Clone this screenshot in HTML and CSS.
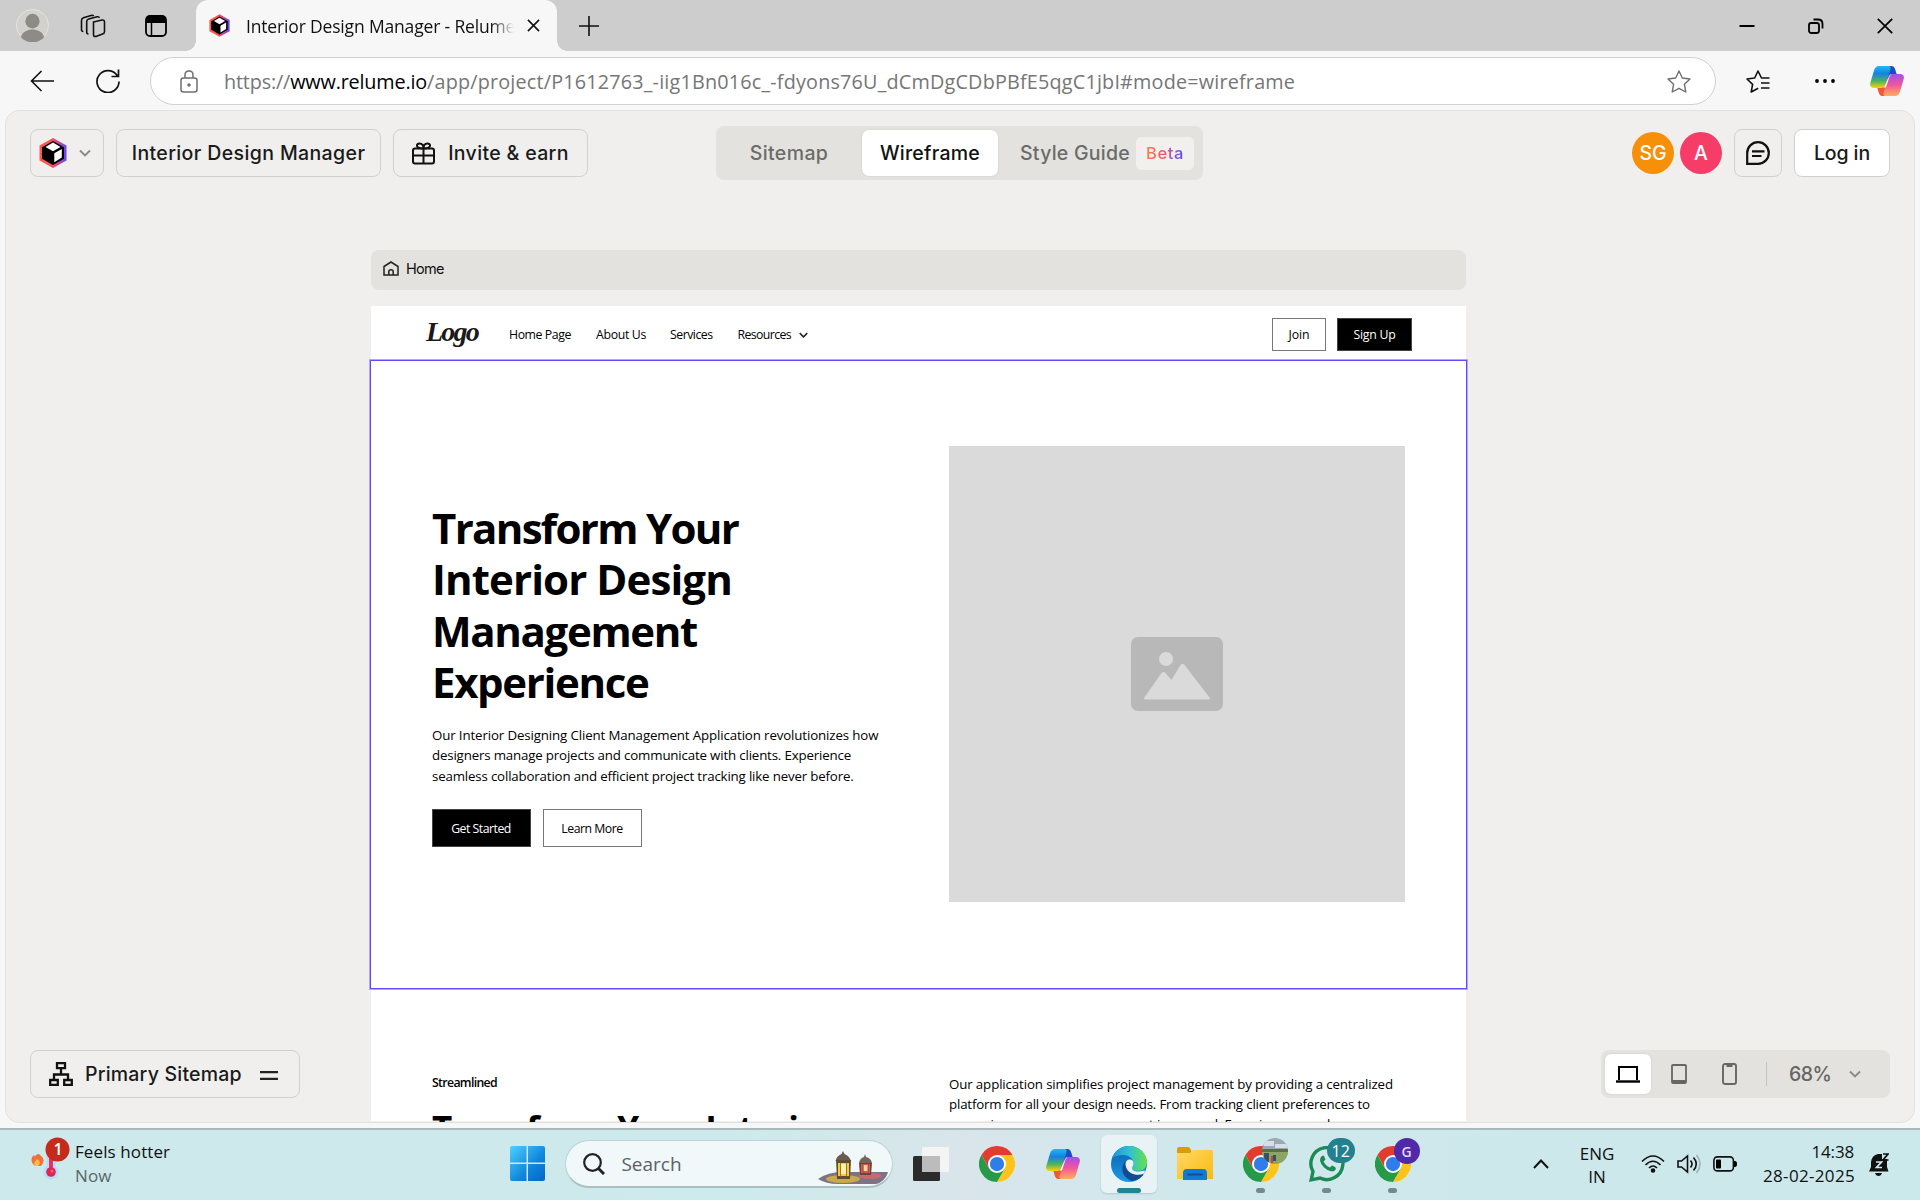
FILE: index.html
```html
<!DOCTYPE html>
<html lang="en">
<head>
<meta charset="utf-8">
<title>Interior Design Manager - Relume</title>
<link rel="stylesheet" href="styles.css">
</head>
<body>
<svg width="0" height="0" class="defs" aria-hidden="true">
  <defs>
    <linearGradient id="gHex" x1="0" y1="0" x2="1" y2="0"><stop offset=".3" stop-color="#ff5a4d"/><stop offset=".65" stop-color="#d6447e"/><stop offset="1" stop-color="#6248ff"/></linearGradient>
    <linearGradient id="gWin" x1="0" y1="0" x2="1" y2="1"><stop offset="0" stop-color="#4fd0ff"/><stop offset=".6" stop-color="#0f86dc"/><stop offset="1" stop-color="#0067c8"/></linearGradient>
    <linearGradient id="gCa" x1="0" y1="0" x2="0" y2="1"><stop offset="0" stop-color="#22b8f4"/><stop offset=".35" stop-color="#1482e0"/><stop offset=".7" stop-color="#52b45c"/><stop offset="1" stop-color="#ffd400"/></linearGradient>
    <linearGradient id="gCb" x1="0" y1="0" x2="0" y2="1"><stop offset="0" stop-color="#a24df0"/><stop offset=".5" stop-color="#f2569a"/><stop offset="1" stop-color="#ffb05a"/></linearGradient>
    <linearGradient id="gEa" x1="0" y1="0" x2="1" y2="0"><stop offset="0" stop-color="#1d94d8"/><stop offset=".5" stop-color="#2fc1d4"/><stop offset="1" stop-color="#67e244"/></linearGradient>
    <linearGradient id="gEb" x1="0" y1="0" x2="0" y2="1"><stop offset="0" stop-color="#0a5fb0"/><stop offset="1" stop-color="#1b9ae4"/></linearGradient>
    <linearGradient id="gFo" x1="0" y1="0" x2="1" y2="1"><stop offset="0" stop-color="#ffd968"/><stop offset="1" stop-color="#fbb90d"/></linearGradient>
    <symbol id="relume" viewBox="0 0 28 30">
      <path d="M14 0 27.500 7.500v15L14 30 .5 22.500v-15z" fill="url(#gHex)"/>
      <path d="M14 3 25 9.200v11.600L14 27 3 20.800V9.200z" fill="#000"/>
      <path d="M14 4.500 21.500 9 14 13.300 6.500 9z" fill="#fff"/>
      <path d="M15.300 15.200 22.800 11v8.500l-7.500 4.700z" fill="#fff"/>
    </symbol>
    <symbol id="copilot" viewBox="0 0 34 30">
      <path d="M17 0h4c3 0 4 2 5 6l1 3h-7l-4 6z" fill="#1b4cc9"/>
      <path d="M17 30h-4c-3 0-4-2-5-6l-1-3h8l3-6z" fill="#ee5a33"/>
      <path d="M9 0h9c2.500 0 3 1 2.500 3l-4.500 15c-.8 2.500-2 4-5 4H4c-3 0-4.500-2-3.700-5L4 4.500C5 1.500 6.500 0 9 0z" fill="url(#gCa)"/>
      <path d="M25 30h-9c-2.500 0-3-1-2.500-3L18 12c.8-2.500 2-4 5-4h7c3 0 4.500 2 3.700 5L30 25.500c-1 3-2.500 4.500-5 4.500z" fill="url(#gCb)"/>
      <path d="M20 8.500h1.500c-1.500.8-2 2-2.600 4L16 21.500h-2.500c1-.8 1.500-1.700 2-3.300z" fill="#f6f6f8"/>
    </symbol>
    <symbol id="chrome" viewBox="0 0 48 48">
      <circle cx="24" cy="24" r="24" fill="#fff"/>
      <path d="M24 12h20.800A24 24 0 0 0 3.200 12l10.400 18z" fill="#e33b2e"/>
      <path d="M34.400 30 24 48A24 24 0 0 0 44.800 12H24z" fill="#fcc41a"/>
      <path d="M13.600 30 3.200 12A24 24 0 0 0 24 48l10.400-18z" fill="#269a48"/>
      <circle cx="24" cy="24" r="12" fill="#fff"/><circle cx="24" cy="24" r="9.500" fill="#2f7de9"/>
    </symbol>
    <symbol id="chev" viewBox="0 0 12 8"><path d="M1 1.500 6 6.500l5-5" fill="none" stroke="currentColor" stroke-width="1.900"/></symbol>
  </defs>
</svg>

<div class="screen">
  <header class="tabstrip">
    <svg class="ava" viewBox="0 0 34 34"><circle cx="17" cy="17" r="16.500" fill="#d3d1ce" stroke="#e6e4e1"/><ellipse cx="17" cy="12.500" rx="7.300" ry="7.500" fill="#8e8a86"/><path d="M5 29c2-6 7-8 12-8s10 2 12 8a16 16 0 0 1-24 0z" fill="#8e8a86"/></svg>
    <svg class="wsp" viewBox="0 0 26 24" fill="none" stroke="#111" stroke-width="1.600"><path d="m13.500 8 8.500-2q2.500-.3 2.500 2v9.500q0 2-2 2.600l-6.500 2.300q-2.500.6-2.500-1.800z"/><path d="M8.500 20q-1.800 0-1.800-2V7.500q0-2 2-2.500L17 2.800q2-.3 2.500 1"/><path d="M3.300 17.500Q1.500 17.500 1.500 15.500V6.500q0-2 2-2.700L11 1.500q2-.4 2.700.5"/></svg>
    <svg class="tac" viewBox="0 0 22 22"><rect x="1" y="1" width="20" height="20" rx="4" fill="none" stroke="#000" stroke-width="1.800"/><path d="M1 8V4q0-3 3-3h14q3 0 3 3v4z"/><path d="M6.500 8v13" stroke="#000" stroke-width="1.500"/></svg>
    <div class="tab">
      <svg class="fav"><use href="#relume"/></svg>
      <span class="tab-title">Interior Design Manager - Relume</span>
      <svg class="tab-x" viewBox="0 0 14 14"><path d="m1 1 12 12M13 1 1 13" stroke="#111" stroke-width="1.700"/></svg>
    </div>
    <svg class="plus" viewBox="0 0 20 20"><path d="M10 0v20M0 10h20" stroke="#111" stroke-width="1.600"/></svg>
    <div class="winbtns">
      <svg viewBox="0 0 16 16"><path d="M.5 8h15" stroke="#000" stroke-width="2"/></svg>
      <svg viewBox="0 0 16 16" fill="none" stroke="#000" stroke-width="1.800"><rect x="1" y="5" width="10" height="10" rx="2.200"/><path d="M5.500 1.500H10q4.500 0 4.500 4.500v4.500"/></svg>
      <svg viewBox="0 0 16 16"><path d="m.8.8 14.400 14.400M15.200.8.8 15.200" stroke="#000" stroke-width="1.700"/></svg>
    </div>
  </header>

  <div class="toolbar">
    <svg class="back" viewBox="0 0 24 22" fill="none" stroke="#111" stroke-width="1.600"><path d="M24 11H1.500M11.500 1l-10 10 10 10"/></svg>
    <svg class="reload" viewBox="0 0 24 24" fill="none" stroke="#111" stroke-width="1.700"><path d="M21.500 7A11 11 0 1 0 23 12.500M22.500.5V7.500h-7"/></svg>
    <div class="address">
      <svg class="lock" viewBox="0 0 18 23" fill="none" stroke="#6f6f6f" stroke-width="1.500"><rect x="1" y="8" width="16" height="14" rx="2.500"/><path d="M5 8V5q0-4 4-4t4 4v3"/><circle cx="9" cy="15" r="1" fill="#6f6f6f"/></svg>
      <span class="url">https://<b>www.relume.io</b><i>/app/project/P1612763_-iig1Bn016c_-fdyons76U_dCmDgCDbPBfE5qgC1jbI#mode=wireframe</i></span>
      <svg class="star" viewBox="0 0 24 23" fill="none" stroke="#6f6f6f" stroke-width="1.400" stroke-linejoin="round"><path d="m12 1 3.300 7 7.700 1-5.600 5.300L18.800 22 12 18.300 5.200 22l1.400-7.700L1 9l7.700-1z"/></svg>
    </div>
    <svg class="favs" viewBox="0 0 24 23" fill="none" stroke="#111" stroke-width="1.600" stroke-linejoin="round"><path d="M23.500 8h-8L12 1 8.700 8 1 9l5.600 5.300L5.200 22l7-3.800M15 13h8.500M15 18h8.500"/></svg>
    <svg class="dots" viewBox="0 0 20 4"><circle cx="2" cy="2" r="1.900"/><circle cx="10" cy="2" r="1.900"/><circle cx="18" cy="2" r="1.900"/></svg>
    <svg class="cop"><use href="#copilot"/></svg>
  </div>

  <main class="app">
    <div class="app-head">
      <div class="head-left">
        <div class="btn btn-logo"><svg class="brand"><use href="#relume"/></svg><svg class="chev grey"><use href="#chev"/></svg></div>
        <div class="btn btn-name">Interior Design Manager</div>
        <div class="btn btn-invite"><svg class="gift" viewBox="0 0 23 22" fill="none" stroke="#111" stroke-width="2"><rect x="1" y="6" width="21" height="15" rx="2"/><path d="M1 13h21M11.500 6v15M11.500 6C3 6 4 1 7.500 1c2.500 0 4 2 4 5 0-3 1.500-5 4-5C19 1 20 6 11.500 6z"/></svg><span>Invite &amp; earn</span></div>
      </div>
      <nav class="modes">
        <span class="mode">Sitemap</span>
        <span class="mode mode-on">Wireframe</span>
        <span class="mode mode-guide">Style Guide<em class="beta"><span>Beta</span></em></span>
      </nav>
      <div class="head-right">
        <span class="user user-sg">SG</span>
        <span class="user user-a">A</span>
        <div class="btn btn-chat"><svg viewBox="0 0 24 24" fill="none" stroke="#111" stroke-width="2.200"><path d="M1.200 22.800V12A10.800 10.800 0 1 1 12 22.800zM6 10.300h12.500M6 15h9.500"/></svg></div>
        <div class="btn btn-login">Log in</div>
      </div>
    </div>

    <div class="canvas">
      <div class="pagebar"><svg viewBox="0 0 16 15" fill="none" stroke="#222" stroke-width="1.500"><path d="M1 5.500 8 1l7 4.500V14H1z"/><path d="M5.800 14v-3.200q0-2 2.200-2t2.200 2V14"/></svg><span>Home</span></div>
      <div class="site">
        <div class="site-nav">
          <span class="wordmark">Logo</span>
          <span class="n1">Home Page</span><span class="n2">About Us</span><span class="n3">Services</span><span class="n4">Resources</span>
          <svg class="chev navchev"><use href="#chev"/></svg>
          <span class="sbtn join">Join</span><span class="sbtn solid signup">Sign Up</span>
        </div>
        <section class="hero">
          <div class="hero-copy">
            <h1><span class="tight">Transform Your</span><br><span class="loose">Interior Design</span><br>Management<br><span>Experience</span></h1>
            <p><span class="wide-line">Our Interior Designing Client Management Application revolutionizes how</span><br>designers manage projects and communicate with clients. Experience<br>seamless collaboration and efficient project tracking like never before.</p>
            <div class="cta"><span class="sbtn solid">Get Started</span><span class="sbtn">Learn More</span></div>
          </div>
          <div class="picture"><svg viewBox="0 0 92 74"><rect width="92" height="74" rx="7" fill="#b8b8b8"/><circle cx="35" cy="22" r="7" fill="#dadada"/><path d="M13 61 30.500 36q2-2 4 0l6 7 9-15q2-2.500 4 0L79 61q0 1.500-2 1.500H15q-2 0-2-1.500z" fill="#dadada"/></svg></div>
        </section>
        <section class="streamlined">
          <div><h3>Streamlined</h3><h2>Transform Your Interior</h2></div>
          <p><span class="wide-line">Our application simplifies project management by providing a centralized</span><br>platform for all your design needs. From tracking client preferences to<br>managing resources, every aspect is covered. Experience seamless</p>
        </section>
      </div>
    </div>

    <div class="btn primary"><svg viewBox="0 0 24 24" fill="none" stroke="#111" stroke-width="2.300"><path d="M8 1.200h8v5H8zM1.200 18h7.600v4.800H1.200zM15.200 18h7.600v4.800h-7.600zM12 6v6M5 18v-5.500h14V18"/></svg><span>Primary Sitemap</span><svg class="eq" viewBox="0 0 18 9"><path d="M0 1.200h18M0 7.800h18" stroke="#222" stroke-width="2.200"/></svg></div>
    <div class="devices">
      <span class="dev dev-on"><svg class="laptop" viewBox="0 0 24 17" fill="none" stroke="#000"><path d="M3 14V1h18v13" stroke-width="2"/><path d="M0 15.500h24" stroke-width="2.400"/></svg></span>
      <svg class="tablet" viewBox="0 0 16 20" fill="none" stroke="#666" stroke-width="1.800"><rect x="1" y="1" width="14" height="18" rx="1"/><path d="M1 17.500h14" stroke-width="3"/></svg>
      <svg class="phone" viewBox="0 0 15 22" fill="none" stroke="#666" stroke-width="1.900"><rect x="1" y="1" width="13" height="20" rx="2"/><path d="M4.500 2.500h6" stroke-width="3"/></svg>
      <i class="rule"></i>
      <span class="zoom">68%</span>
      <svg class="chev grey"><use href="#chev"/></svg>
    </div>
  </main>

  <footer class="taskbar">
    <div class="weather">
      <svg viewBox="0 0 40 44"><path d="M8 16c5 4 5 6 4 9l-2 3H4C-1 24 0 19 3 17l1 2c0-2 2-3 4-3z" transform="translate(0 1)" fill="#f2703a"/><path d="M6 22c3 2 4 4 1 7H4c-2-3 0-4 2-7z" fill="#ffc04a"/><circle cx="20" cy="35" r="7.500" fill="#b9dcfb"/><rect x="15.500" y="14" width="9" height="20" rx="4" fill="#b9dcfb"/><rect x="18" y="20" width="4" height="14" fill="#e8345a"/><circle cx="20" cy="35" r="4.800" fill="#dc2850"/><circle cx="21" cy="34" r="1.500" fill="#f59"/><circle cx="26.500" cy="12.500" r="12" fill="#c42b1c"/><text x="27" y="18" text-anchor="middle" class="badge-one">1</text></svg>
      <p><span>Feels hotter</span><br><span class="dim">Now</span></p>
    </div>
    <div class="apps">
      <span class="cell"><svg class="win" viewBox="0 0 35 35"><g fill="url(#gWin)"><path d="M2 0h14.500v16.500H0V2q0-2 2-2zM18 0h15q2 0 2 2v14.500H18zM0 18h16.500v17H2q-2 0-2-2zM18 18h17v15q0 2-2 2H18z"/></g></svg></span>
      <div class="search">
        <svg class="mag" viewBox="0 0 22 22" fill="none" stroke="#222" stroke-width="2.200"><circle cx="9.500" cy="9.500" r="8.300"/><path d="m15.500 15.500 5.500 5.500" stroke-width="3"/></svg>
        <span>Search</span>
        <svg class="lantern" viewBox="0 0 70 34"><path d="M0 28q10-7 24-7h46c-2 7-7 11-12 12H20Q8 33 0 28z" fill="#7c7484"/><ellipse cx="25" cy="28" rx="17" ry="4" fill="#c9a94a"/><ellipse cx="52" cy="25" rx="12" ry="3" fill="#c46a70"/><path d="M17.500 10q1-5 6-7L25 0l1.500 3q5 2 6.500 7z" fill="#6b5c50"/><path d="M18 9h15l-1 19H19z" fill="#5f4c35"/><path d="M20 12h11v13H20z" fill="#ffc832"/><path d="M23 13h5v10h-5z" fill="#fff0a8"/><path d="M41 12q1-5 5-6l1-3 1 3q5 1 6 6z" fill="#75645a"/><path d="M41 12h13l-1 12H42z" fill="#64483f"/><path d="M43 13h9v9h-9z" fill="#e0504c"/><path d="M45.500 14h4v6h-4z" fill="#ffd0a0"/><path d="M22.500 12v14M28.500 12v14M45 13v9M50.500 13v9" stroke="#7b6238" stroke-width=".8"/></svg>
      </div>
      <span class="cell"><svg class="tview" viewBox="0 0 36 34"><rect y="9" width="27" height="25" rx="1.500" fill="#2b2b2b"/><rect x="9" width="27" height="25" rx="1" fill="#f4f4f4"/><path d="M9 9h18v16H9z" fill="#bcbcbc"/></svg></span>
      <span class="cell"><svg class="i36"><use href="#chrome"/></svg></span>
      <span class="cell"><svg class="cop"><use href="#copilot"/></svg></span>
      <span class="cell cell-on"><svg class="i36" viewBox="0 0 36 36"><circle cx="18" cy="18" r="18" fill="url(#gEb)"/><path d="M1 12C4 4 11 0 18 0c11 0 18 8 18 16 0 6-4 9-9 9-4 0-6-1.500-6-3 0-1 1.500-2 1.500-5C22.500 12 17 9 12 9 7 9 3 11 1 12z" fill="url(#gEa)"/><path d="M15 15c-6 5-5 16 6 20 5 0 10-4 12.500-8-3 1.500-6 2-9 1.500-6-1-10-6-9.500-13.500z" fill="#134b91"/><path d="M33 27.500c1.500-1 2-3 3-6v14h-9c3-2 5-5 6-8z" fill="#e9f3f6"/><path d="M14.500 18c0-3 2-4.500 4.200-4.500 2.300 0 4 1.500 3.800 3.800 0 2.700-1.500 3.700-1.500 4.700 0 2 3 3.800 7 3.500 3-.2 5-1.500 6-1l-.8 3c-3 1.200-6 1.500-9 1-5.500-1-9.500-5-9.700-10.500z" fill="#e9f3f6"/></svg><i class="mark wide"></i></span>
      <span class="cell"><svg class="folder" viewBox="0 0 36 33"><path d="M0 2q0-2 2-2h9q2 0 3 3l1 5H0z" fill="#dd9c05"/><path d="M0 6h13l3-3h18q2 0 2 2v27H0z" fill="url(#gFo)"/><path d="M6 33v-7q0-4 4-4h16q4 0 4 4v7z" fill="#0f7bd2"/><path d="M11 27.500h14" stroke="#0a5296" stroke-width="1.800" stroke-linecap="round"/></svg></span>
      <span class="cell"><svg class="i36"><use href="#chrome"/></svg><svg class="bdg" viewBox="0 0 26 26"><clipPath id="rc"><rect width="26" height="26" rx="11"/></clipPath><g clip-path="url(#rc)"><path fill="#9aa9b4" d="M0 0h26v26H0z"/><path fill="#d8dfe4" d="M2 3h10v5H2zM13 6h12v4H13z"/><path fill="#8da564" d="M0 13h26v13H0z"/><path fill="#5c6f45" d="M0 11h26v3H0z"/><path fill="#34506a" d="M2 15h5v9H2zM11 17h3v6h-3z"/><path fill="#c2453b" d="M9 18h2v7H9z"/></g></svg><i class="mark"></i></span>
      <span class="cell"><svg class="i36" viewBox="0 0 36 36" fill="none" stroke="#1b8a56" stroke-width="3.400"><path d="M2.200 33.800 4 25.500A16 16 0 1 1 11 32z"/><path d="M12 11c-4 5 6 16 13 14 2-1 2.500-3 1-4l-3-1.500-2 2c-3-1-5-3-6.500-6l2-2-1.500-3.500c-1-1-2-.5-3 1z" fill="#1b8a56" stroke="none"/></svg><b class="bdg twelve">12</b><i class="mark"></i></span>
      <span class="cell"><svg class="i36"><use href="#chrome"/></svg><b class="bdg gee">G</b><i class="mark"></i></span>
    </div>
    <div class="tray">
      <svg class="up" viewBox="0 0 16 10"><path d="m1 9 7-7.500L15 9" fill="none" stroke="#111" stroke-width="2"/></svg>
      <p class="lang">ENG<br>IN</p>
      <svg class="wifi" viewBox="0 0 24 18" fill="none" stroke="#111" stroke-width="1.600"><path d="M1 6.500q11-11 22 0M4.500 10q7.500-7.500 15 0M8 13q4-4 8 0"/><circle cx="12" cy="15.500" r="1.500" fill="#111"/></svg>
      <svg class="vol" viewBox="0 0 24 20" fill="none" stroke="#111" stroke-width="1.600"><path d="M1 7v6h3.500l6 5V2l-6 5zM13.500 6.500q3 3.500 0 7M16.500 3.500q5.500 6.500 0 13"/><path d="M19.500 1q7 9 0 18" stroke="#9db4b8"/></svg>
      <svg class="bat" viewBox="0 0 24 16"><rect x=".9" y=".9" width="19.500" height="14" rx="3.500" fill="none" stroke="#111" stroke-width="1.600"/><rect x="3" y="3.500" width="5" height="9" rx="1"/><path d="M21 5h1q2 0 2 3t-2 3h-1z"/></svg>
      <p class="clock">14:38<br><span>28-02-2025</span></p>
      <svg class="bell" viewBox="0 0 20 24"><path d="M0 18.500 2 14V9q1-7 7-8h4v5h5v8l1.500 4.500zM6 20h7q-1 3-3.500 3T6 20z" fill="#111"/><path d="M7 9h5.500L7.500 14.500H13" fill="none" stroke="#d2e9ed" stroke-width="1.700"/><path d="M14 1h5l-5 6h5.500" fill="none" stroke="#111" stroke-width="1.700"/></svg>
    </div>
  </footer>
</div>
</body>
</html>
```
FILE: styles.css
```css
* { box-sizing: border-box; }
body { margin: 0; background: #f7f7f7; color: #111; font-family: "Open Sans", "Noto Sans", sans-serif; }
p, h1, h2, h3 { margin: 0; }
svg { display: block; flex: none; }
.defs { position: absolute; }
.screen { width: 1920px; height: 1200px; overflow: hidden; display: flex; flex-direction: column; background: #f7f7f7; }

/* browser tab strip */
.tabstrip { height: 51px; flex: none; display: flex; align-items: center; background: #cdcdcd; padding-left: 16px; }
.ava { width: 33px; height: 33px; }
.wsp { width: 26px; height: 24px; margin-left: 31px; }
.tac { width: 22px; height: 22px; margin-left: 39px; }
.tab { width: 361px; height: 51px; margin-left: 29px; background: #f7f7f7; border-radius: 12px 12px 0 0; display: flex; align-items: center; padding-left: 13px; position: relative; }
.tab::before, .tab::after { content: ""; position: absolute; bottom: 0; width: 10px; height: 10px; }
.tab::before { left: -10px; background: radial-gradient(circle at 0 0, transparent 9.500px, #f7f7f7 10px); }
.tab::after { right: -10px; background: radial-gradient(circle at 100% 0, transparent 9.500px, #f7f7f7 10px); }
.fav { width: 21px; height: 23px; }
.fav use { transform: scale(1); }
.tab-title { width: 268px; margin-left: 16px; overflow: hidden; white-space: nowrap; font-size: 17.500px; letter-spacing: -.165px; -webkit-mask-image: linear-gradient(90deg, #000 245px, transparent 268px); mask-image: linear-gradient(90deg, #000 245px, transparent 268px); }
.tab-x { width: 13px; height: 13px; margin-left: 13px; }
.plus { width: 20px; height: 20px; margin-left: 22px; }
.winbtns { margin-left: auto; display: flex; gap: 53px; padding-right: 27px; }
.winbtns svg { width: 16px; height: 16px; }

/* browser toolbar */
.toolbar { height: 59px; flex: none; display: flex; align-items: center; padding-left: 30px; }
.toolbar > svg { margin-top: 1px; }
.back { width: 24px; height: 22px; }
.reload { width: 24px; height: 24px; margin-left: 42px; }
.address { width: 1566px; height: 48px; margin: 1px 30px 0 30px; padding: 0 24px 0 29px; background: #fff; border: 1px solid #d0d0d0; border-radius: 24px; display: flex; align-items: center; }
.lock { width: 18px; height: 23px; }
.url { margin-left: 26px; font-size: 19.800px; color: #767676; letter-spacing: -.166px; white-space: nowrap; }
.url b { font-weight: 400; color: #000; }
.url i { font-style: normal; letter-spacing: .19px; }
.star { width: 24px; height: 23px; margin-left: auto; }
.favs { width: 24px; height: 23px; }
.dots { width: 20px; height: 4px; margin-left: 45px; }
.cop { width: 34px; height: 30px; }
.toolbar .cop { margin-left: 35px; margin-top: 1px; }

/* application frame */
.app { height: 1013px; flex: none; margin: 0 5px 5px; border: 1px solid #e1e1e1; border-radius: 14px; background: #f0efed; overflow: hidden; position: relative; display: flex; flex-direction: column; font-family: Inter, sans-serif; font-size: 19.500px; font-weight: 450; }
.app-head { height: 54px; flex: none; margin: 15px 24px 0; display: grid; grid-template-columns: 1fr auto 1fr; align-items: center; }
.btn { height: 48px; border: 1px solid #d1d0ce; border-radius: 8px; display: flex; align-items: center; justify-content: center; white-space: nowrap; color: #1a1a1a; }
.head-left { display: flex; gap: 12px; }
.btn-logo { width: 74px; gap: 12px; padding-right: 4px; }
.brand { width: 28px; height: 30px; }
.chev { width: 12px; height: 8px; color: #222; }
.chev.grey { color: #8a8987; }
.btn-name { width: 265px; letter-spacing: .38px; }
.btn-invite { width: 195px; gap: 13px; letter-spacing: .35px; }
.gift { width: 23px; height: 25px; }
.modes { width: 487px; height: 54px; margin-right: 1px; padding: 4px; background: #e3e2de; border-radius: 8px; display: flex; gap: 4px; color: #6b6b69; }
.mode { width: 138px; height: 46px; display: flex; align-items: center; justify-content: center; border-radius: 7px; letter-spacing: .4px; }
.mode-on { width: 136px; background: #fff; color: #111; letter-spacing: .25px; box-shadow: 0 0 2px #0002; }
.mode-guide { width: 197px; letter-spacing: .25px; justify-content: flex-start; padding-left: 18px; white-space: nowrap; }
.beta { width: 58px; height: 33px; margin-left: 6px; background: #f1f0ee; border-radius: 5px; display: flex; align-items: center; justify-content: center; font-style: normal; font-size: 16.500px; letter-spacing: .6px; }
.beta span { color: transparent; background: linear-gradient(90deg, #ff744f 10%, #ea5468 50%, #6248ff 90%); -webkit-background-clip: text; background-clip: text; }
.head-right { display: flex; align-items: center; justify-content: flex-end; }
.user { width: 42px; height: 42px; border-radius: 50%; color: #fff; display: flex; align-items: center; justify-content: center; font-weight: 500; font-size: 19.500px; }
.user-sg { background: #f79009; }
.user-a { background: #f63d68; margin-left: 6px; }
.btn-chat { width: 48px; margin-left: 12px; }
.btn-chat svg { width: 24px; height: 24px; }
.btn-login { width: 96px; margin-left: 12px; background: #fff; letter-spacing: -.1px; }

/* wireframe canvas */
.canvas { width: 1095px; margin: 70px 0 0 365px; }
.pagebar { height: 40px; background: #e3e2de; border-radius: 8px; display: flex; align-items: center; gap: 7px; padding: 0 0 3px 12px; font-size: 14.500px; font-weight: 420; letter-spacing: -.7px; }
.pagebar svg { width: 16px; height: 15px; }
.site { margin-top: 16px; background: #fff; height: 815px; color: #000; font-family: "Open Sans", "Noto Sans", sans-serif; font-weight: 400; }
.site-nav { height: 55px; display: flex; align-items: center; padding: 2px 54px 0 55px; font-size: 12.300px; white-space: nowrap; letter-spacing: -.42px; }
.wordmark { width: 83px; font: italic 700 28px/28px "Liberation Serif", serif; letter-spacing: -1.800px; margin-top: -5px; color: #1a1a1a; }
.n1 { width: 87px; }
.n2 { width: 74px; letter-spacing: -.33px; }
.n3 { width: 67.500px; letter-spacing: -.5px; }
.n4 { width: 61px; letter-spacing: -.6px; }
.navchev { width: 9px; height: 6px; }
.sbtn { display: flex; align-items: center; justify-content: center; border: 1px solid #777; background: #fff; color: #000; height: 33px; font-size: 12.300px; letter-spacing: -.5px; }
.sbtn.solid { background: #000; color: #fff; border-color: #444; }
.join { width: 54px; margin-left: auto; margin-top: -1px; letter-spacing: -.1px; }
.signup { width: 75px; margin-left: 11px; margin-top: -1px; letter-spacing: -.25px; }
.hero { height: 627px; position: relative; box-shadow: 0 0 0 1px #6248ff, 0 0 0 2px #b3a8ff; padding: 0 61px; display: grid; grid-template-columns: 456px 456px; gap: 61px; align-items: center; }
.hero h1 { font-size: 42px; line-height: 51.300px; letter-spacing: -1.350px; font-weight: 700; }
.hero h1 .tight { letter-spacing: -1.680px; }
.hero h1 .loose { letter-spacing: -.9px; }
.hero p, .streamlined p { font-size: 13.300px; line-height: 20.500px; letter-spacing: -.17px; white-space: nowrap; }
.hero p .wide-line, .streamlined p .wide-line { letter-spacing: -.13px; }
.hero p { margin-top: 17.500px; }
.cta { display: flex; gap: 12px; margin: 23px 0 0 -.5px; }
.cta .sbtn { width: 99px; height: 38px; }
.picture { height: 456px; margin-bottom: 1px; background: #dadada; display: flex; align-items: center; justify-content: center; }
.picture svg { width: 92px; height: 74px; }
.streamlined { padding: 86px 61px 0; display: grid; grid-template-columns: 456px 456px; gap: 61px; }
.streamlined h3 { font-size: 12.300px; line-height: 18px; font-weight: 600; letter-spacing: -.66px; }
.streamlined h2 { font-size: 35px; line-height: 42px; font-weight: 700; letter-spacing: -.7px; margin-top: 16px; white-space: nowrap; }
.streamlined p { line-height: 20.200px; }

/* floating controls */
.primary { position: absolute; left: 24px; bottom: 24px; width: 270px; justify-content: flex-start; padding-left: 18px; background: #f0efed; letter-spacing: .2px; }
.primary svg { width: 24px; height: 24px; margin-right: 12px; }
.primary svg.eq { width: 18px; height: 9px; margin: 2px 0 0 18px; }
.devices { position: absolute; right: 24px; bottom: 24px; width: 289px; height: 48px; padding-left: 4px; background: #e3e2de; border-radius: 8px; display: flex; align-items: center; color: #666; }
.dev-on { width: 46px; height: 40px; background: #fff; border-radius: 6px; display: flex; align-items: center; justify-content: center; box-shadow: 0 0 2px #0002; }
.laptop { width: 24px; height: 17px; }
.tablet { width: 16px; height: 20px; margin-left: 20px; }
.phone { width: 15px; height: 22px; margin-left: 35px; }
.rule { width: 1px; height: 24px; background: #c4c3c0; margin-left: 29px; }
.zoom { margin-left: 22px; width: 60px; letter-spacing: -.5px; }

/* taskbar */
.taskbar { height: 72px; flex: none; border-top: 2px solid #a9b8ba; background: linear-gradient(90deg, #cde9ec 0, #cde9ec 32%, #cdebec 38%, #d9e5eb 50%, #cfe8ec 62%, #cbe8eb 100%); display: grid; grid-template-columns: 1fr 921px 1fr; }
.weather { display: flex; padding: 8px 0 0 31px; font-size: 17px; line-height: 24px; }
.weather svg { width: 40px; height: 44px; margin-right: 4px; margin-top: -1px; }
.weather p { margin-top: 1.500px; letter-spacing: .1px; }
.badge-one { font: 600 16px "Open Sans", sans-serif; fill: #fff; }
.dim { color: #5a6669; }
.apps { display: flex; gap: 10px; padding-top: 5px; }
.cell { width: 56px; height: 58px; display: flex; align-items: center; justify-content: center; position: relative; }
.cell-on { background: #e9f3f6; border-radius: 6px; box-shadow: 0 1px 2px #0002; }
.cell svg { margin-top: -1px; }
.win { width: 35px; height: 35px; }
.tview { width: 36px; height: 34px; }
.i36 { width: 36px; height: 36px; }
.folder { width: 36px; height: 33px; }
.search { width: 328px; height: 48px; margin-top: 5px; border: 1px solid #bcd2d5; border-bottom: 2px solid #aabfc2; border-radius: 24px; background: #f1f8fa; display: flex; align-items: center; padding: 0 4px 0 17px; font-size: 19px; color: #5b6163; }
.mag { width: 22px; height: 22px; margin-right: 16px; }
.lantern { width: 70px; height: 34px; margin: 9px 0 0 auto; }
.mark { position: absolute; left: 23.500px; bottom: 0; width: 9px; height: 5px; border-radius: 3px; background: #78878a; }
.mark.wide { left: 16px; width: 24px; background: #1f8494; }
.cell .bdg { position: absolute; left: 29px; top: 3px; width: 26px; height: 26px; margin: 0; border-radius: 13px; color: #fff; font-size: 16px; font-weight: 400; display: flex; align-items: center; justify-content: center; }
.cell .twelve { left: 28px; width: 28px; height: 25px; background: #22808f; }
.cell .gee { left: 29px; background: #5128a8; color: #e3d8f5; font-size: 14px; font-weight: 600; }
.tray { display: flex; align-items: flex-start; justify-content: flex-end; padding: 9px 31px 0 0; font-size: 17px; line-height: 24px; color: #111; }
.up { width: 16px; height: 10px; margin-top: 20px; }
.lang { width: 48px; margin: 2.500px 20px 0 24px; text-align: center; line-height: 23px; }
.wifi { width: 24px; height: 18px; margin-top: 16px; }
.vol { width: 24px; height: 20px; margin: 15px 0 0 12px; }
.bat { width: 24px; height: 16px; margin: 17px 0 0 12px; }
.clock { margin: .5px 15px 0 25px; width: 92px; text-align: right; white-space: nowrap; letter-spacing: -.17px; }
.clock span { letter-spacing: .33px; margin-right: -1px; }
.bell { width: 20px; height: 24px; margin-top: 14px; }
```
